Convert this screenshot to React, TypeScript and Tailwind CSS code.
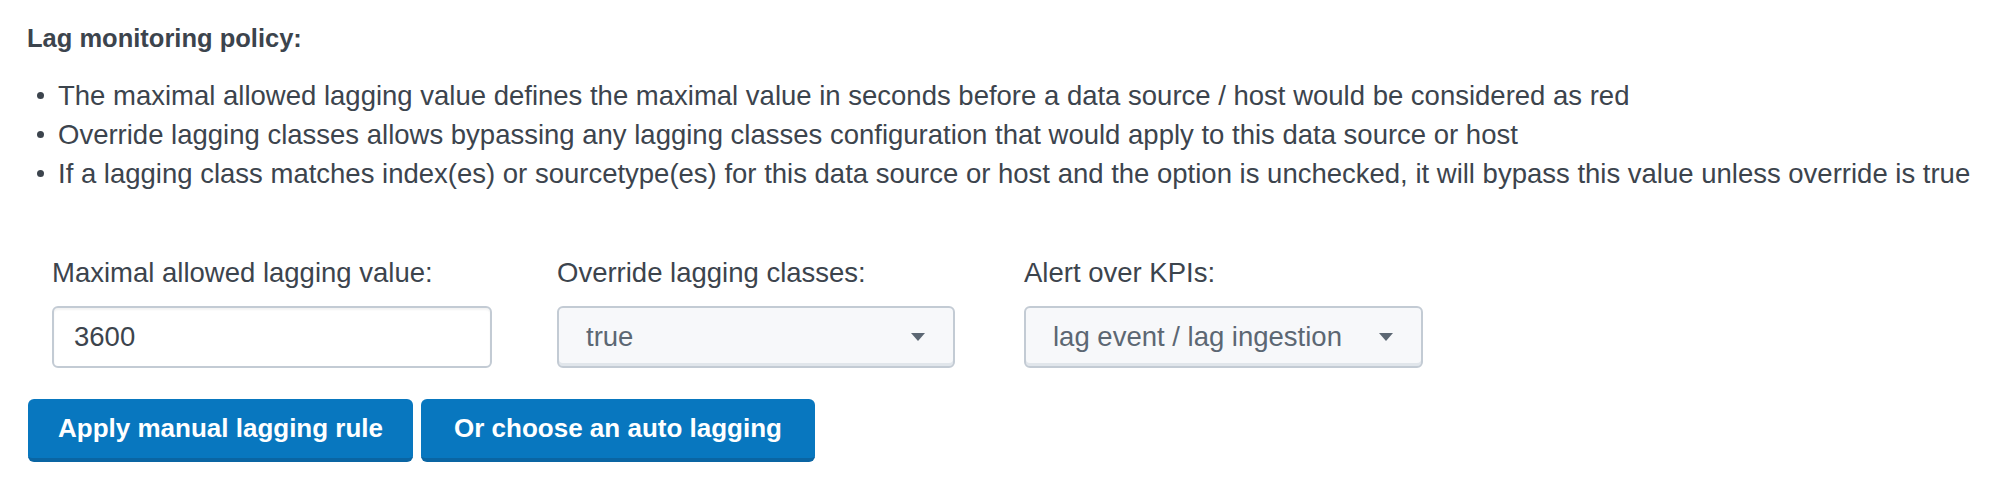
const policies = [
  "The maximal allowed lagging value defines the maximal value in seconds before a data source / host would be considered as red",
  "Override lagging classes allows bypassing any lagging classes configuration that would apply to this data source or host",
  "If a lagging class matches index(es) or sourcetype(es) for this data source or host and the option is unchecked, it will bypass this value unless override is true",
];

function Caret() {
  return (
    <svg width="14" height="8" viewBox="0 0 14 8" className="shrink-0">
      <path d="M0 0h14L7 8z" fill="#5c6773" />
    </svg>
  );
}

function Dropdown({ value }: { value: string }) {
  return (
    <div className="flex h-[62px] items-center justify-between rounded-[6px] border-2 border-[#c3cbd4] bg-[#f7f8fa] pl-[27px] pr-[28px] text-[#5c6773] shadow-[inset_0_-3px_0_#e1e6eb]">
      <span>{value}</span>
      <Caret />
    </div>
  );
}

export default function App() {
  return (
    <div className="min-h-[488px] bg-white pl-[27px] pt-[22px] font-['Liberation_Sans',Arial,sans-serif] text-[27.5px] text-[#3c444d]">
      <h2 className="text-[25.5px] font-bold leading-[32px]">Lag monitoring policy:</h2>

      <ul className="mt-[22px]">
        {policies.map((p) => (
          <li key={p} className="flex items-center leading-[39px]">
            <span className="ml-[10px] mr-[14px] h-[7px] w-[7px] rounded-full bg-[#3c444d]" />
            <span>{p}</span>
          </li>
        ))}
      </ul>

      <div className="ml-[25px] mt-[64px] flex">
        <div className="w-[440px]">
          <label className="block leading-[32px]">Maximal allowed lagging value:</label>
          <div className="mt-[17px] flex h-[62px] items-center rounded-[6px] border-2 border-[#c3cbd4] bg-white pl-[20px] shadow-[inset_0_2px_2px_rgba(0,0,0,0.05)]">
            3600
          </div>
        </div>
        <div className="ml-[65px] w-[398px]">
          <label className="block leading-[32px]">Override lagging classes:</label>
          <div className="mt-[17px]">
            <Dropdown value="true" />
          </div>
        </div>
        <div className="ml-[69px] w-[399px]">
          <label className="block leading-[32px]">Alert over KPIs:</label>
          <div className="mt-[17px]">
            <Dropdown value="lag event / lag ingestion" />
          </div>
        </div>
      </div>

      <div className="mt-[31px] flex gap-[8px] pl-[1px]">
        <button className="h-[63px] rounded-[6px] border-b-[4px] border-[#0a65a3] bg-[#0877bf] px-[30px] text-[26px] font-bold text-white">
          Apply manual lagging rule
        </button>
        <button className="h-[63px] rounded-[6px] border-b-[4px] border-[#0a65a3] bg-[#0877bf] px-[33px] text-[26px] font-bold text-white">
          Or choose an auto lagging
        </button>
      </div>
    </div>
  );
}
